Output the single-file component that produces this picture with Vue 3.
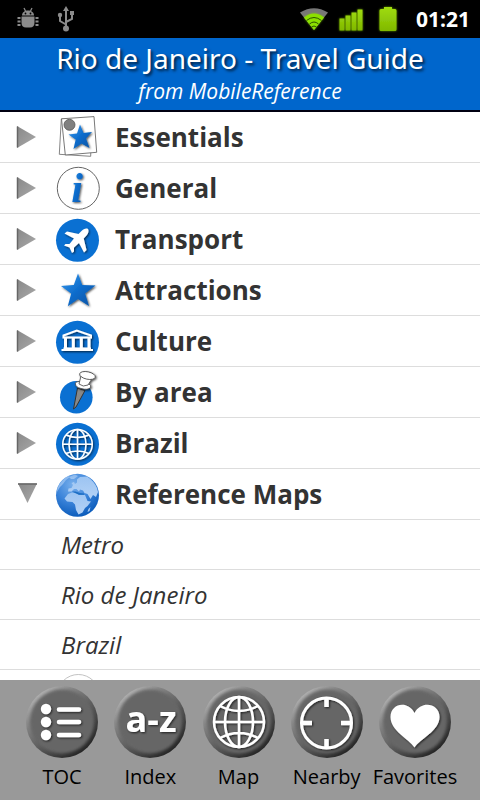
<script setup>
import { ref } from 'vue'

const sections = ref([
  { name: 'Essentials', icon: 'pages', open: false },
  { name: 'General', icon: 'info', open: false },
  { name: 'Transport', icon: 'plane', open: false },
  { name: 'Attractions', icon: 'star', open: false },
  { name: 'Culture', icon: 'museum', open: false },
  { name: 'By area', icon: 'pin', open: false },
  { name: 'Brazil', icon: 'globe', open: false },
  { name: 'Reference Maps', icon: 'earth', open: true, children: ['Metro', 'Rio de Janeiro', 'Brazil'] },
  { name: '', icon: 'ring', open: false },
])

const tabs = [
  { name: 'TOC', icon: 'toc' },
  { name: 'Index', icon: 'index' },
  { name: 'Map', icon: 'map' },
  { name: 'Nearby', icon: 'nearby' },
  { name: 'Favorites', icon: 'heart' },
]
</script>

<template>
  <div class="screen">
    <svg class="defs" width="0" height="0" aria-hidden="true">
      <defs>
        <linearGradient id="blue" x1="0" y1="0" x2="1" y2="1">
          <stop offset="0" stop-color="#3c9bee" />
          <stop offset="0.5" stop-color="#0c6ccc" />
          <stop offset="1" stop-color="#06509f" />
        </linearGradient>
        <linearGradient id="arrow" x1="0" y1="0" x2="1" y2="1">
          <stop offset="0" stop-color="#888" />
          <stop offset="1" stop-color="#aaa" />
        </linearGradient>
        <linearGradient id="rim" x1="0.15" y1="0.1" x2="0.8" y2="0.9">
          <stop offset="0" stop-color="#b4b4b4" />
          <stop offset="0.25" stop-color="#868686" />
          <stop offset="0.6" stop-color="#5a5a5a" />
          <stop offset="1" stop-color="#262626" />
        </linearGradient>
        <linearGradient id="charge" x1="0" y1="0" x2="0" y2="1">
          <stop offset="0" stop-color="#a0dc10" />
          <stop offset="1" stop-color="#80b800" />
        </linearGradient>
        <radialGradient id="ocean" cx="0.4" cy="0.25" r="0.8">
          <stop offset="0" stop-color="#79b0ec" />
          <stop offset="0.5" stop-color="#3b84da" />
          <stop offset="1" stop-color="#0758b8" />
        </radialGradient>
        <linearGradient id="land" x1="0" y1="0" x2="0" y2="1">
          <stop offset="0" stop-color="#9cc4f2" />
          <stop offset="1" stop-color="#b4d2f6" />
        </linearGradient>
        <filter id="shade" x="-20%" y="-20%" width="150%" height="150%">
          <feDropShadow dx="1" dy="1" stdDeviation="0.8" flood-color="#000" flood-opacity="0.7" />
        </filter>
        <filter id="soft" x="-10%" y="-10%" width="120%" height="120%">
          <feGaussianBlur stdDeviation="1.5" />
        </filter>
        <filter id="glow" x="-30%" y="-30%" width="160%" height="160%">
          <feDropShadow dx="0" dy="0" stdDeviation="1" flood-color="#8bd000" flood-opacity="0.7" />
        </filter>
      </defs>
    </svg>

    <div class="status">
      <svg class="droid" viewBox="0 0 24 24" aria-hidden="true">
        <g fill="#8b8b8b">
          <path d="M6 8.500C6 5.500 8.500 3.500 12 3.500S18 5.500 18 8.500Z" />
          <path d="M5.500 9.500H18.500V15.500Q18.500 20.500 14 20.500H10Q5.500 20.500 5.500 15.500Z" />
        </g>
        <path d="M8 1L9.500 4M16 1L14.500 4" fill="none" stroke="#8b8b8b" stroke-width="1.300" />
        <path d="M1.500 10H4.500V12H1.500ZM1.500 13.500H4.500V15.500H1.500ZM1.500 17H4.500V19H1.500ZM19.500 10H22.500V12H19.500ZM19.500 13.500H22.500V15.500H19.500ZM19.500 17H22.500V19H19.500Z" fill="#8b8b8b" />
        <circle cx="9.500" cy="6.500" r="0.900" /><circle cx="14.500" cy="6.500" r="0.900" />
      </svg>
      <svg class="usb" viewBox="0 0 18 26" aria-hidden="true">
        <path d="M9 22V3M9 18.500L3 15V9M9 16L15 13V7" fill="none" stroke="#8b8b8b" stroke-width="2" />
        <g fill="#8b8b8b">
          <path d="M9 0L12 5H6Z" /><circle cx="9" cy="22.500" r="3" />
          <circle cx="3" cy="9" r="2.200" /><path d="M13 5H17V9H13Z" />
        </g>
      </svg>
      <span class="gap"></span>
      <svg class="wifi" viewBox="0 0 28 24" aria-hidden="true">
        <path d="M14 23L0 5.500Q14 -3 28 5.500Z" fill="#777" />
        <path d="M14 23L4 10.500Q14 2.500 24 10.500Z" fill="#8be000" filter="url(#glow)" />
        <path d="M6.500 13.500Q14 7.500 21.500 13.500M9.500 17Q14 13 18.500 17M11.500 20Q14 18 16.500 20" fill="none" stroke="#2c5200" stroke-width="1" />
      </svg>
      <svg class="signal" viewBox="0 0 24 24" aria-hidden="true">
        <path d="M0.500 11.500H5.500V23.500H0.500ZM6.500 8.500H11.500V23.500H6.500ZM12.500 5.500H17.500V23.500H12.500ZM18.500 2.500H23.500V23.500H18.500Z" fill="url(#charge)" filter="url(#glow)" />
      </svg>
      <svg class="battery" viewBox="0 0 18 26" aria-hidden="true">
        <path d="M5 1H13V3H16Q17.500 3 17.500 4.500V23.500Q17.500 25 16 25H2Q0.500 25 0.500 23.500V4.500Q0.500 3 2 3H5Z" fill="url(#charge)" filter="url(#glow)" />
      </svg>
      <time class="clock">01:21</time>
    </div>

    <header class="header">
      <h1>Rio de Janeiro - Travel Guide</h1>
      <p>from MobileReference</p>
    </header>

    <main class="list">
      <section v-for="(section, i) in sections" :key="i">
        <button class="row" type="button" :aria-expanded="section.open" @click="section.open = !section.open">
          <svg class="arrow" viewBox="0 0 24 24" aria-hidden="true">
            <template v-if="section.open && section.name">
              <path d="M2 1.500H21L11.500 21Z" fill="url(#arrow)" />
              <path d="M2 2H21" stroke="#666" stroke-width="1.500" />
            </template>
            <template v-else-if="section.name">
              <path d="M1 1L20 12L1 23Z" fill="url(#arrow)" />
              <path d="M1.500 1.500V22.500" stroke="#666" stroke-width="1.500" />
            </template>
          </svg>
          <svg class="icon" viewBox="0 0 44 44" aria-hidden="true">
            <g v-if="section.icon === 'pages'">
              <path d="M5.300 3L3.300 38.300L34.700 40.300L35.500 4Z" fill="#fff" stroke="#666" stroke-width="0.800" />
              <path d="M5.500 2.800L38 0.600L40.700 36.300L9.300 39Z" fill="#fff" stroke="#555" stroke-width="0.800" />
              <path d="M24 8.500L27.500 17L36 16L30 22.500L33.500 32L25.500 27.500L17.500 33L19.700 23.500L12.500 18.500L21 17.500Z" fill="url(#blue)" filter="url(#shade)" />
              <circle cx="13.500" cy="8.800" r="5.500" fill="#808080" stroke="#555" stroke-width="0.800" />
            </g>
            <g v-else-if="section.icon === 'info'">
              <circle cx="22.300" cy="21.300" r="21" fill="#fff" stroke="#555" stroke-width="0.900" />
              <text class="letter-i" x="21" y="35" text-anchor="middle" filter="url(#shade)">i</text>
            </g>
            <circle v-else-if="section.icon === 'ring'" cx="22.300" cy="21.500" r="21" fill="#fff" stroke="#bbb" stroke-width="0.900" />
            <g v-else-if="section.icon === 'plane'">
              <circle cx="21.500" cy="22.300" r="21.500" fill="#0a70d2" />
              <path d="M32 11C30 10 27.500 11 25.500 13L22.500 16L11 13.500L8.500 15.500L18 20.500L13.500 26L9.500 26L8 27.500L13.500 29.500L16 35L18 33.500V29.500L23 25L28 34.500L30.500 32L27.700 20.500L30.500 17.500C32.500 15.500 33 12.500 32 11Z" fill="#fff" filter="url(#shade)" />
            </g>
            <path v-else-if="section.icon === 'star'" d="M22 4.500L26.200 16L39.500 16.500L29 24.500L33 37L22 30L11.800 37.200L15.200 24.500L5 17L17.800 16Z" fill="url(#blue)" filter="url(#shade)" />
            <g v-else-if="section.icon === 'museum'">
              <circle cx="21.500" cy="22.300" r="21.500" fill="#0a70d2" />
              <g filter="url(#shade)">
                <path d="M7.500 17.500V15.500L20.800 10.500L35 15.500V17.500Z" fill="none" stroke="#fff" stroke-width="2" />
                <path d="M9.500 18V28M17.300 18V28M25.300 18V28M33 18V28" stroke="#fff" stroke-width="3" />
                <path d="M7.500 27.500H35V29H37V31H5.500V29H7.500Z" fill="#fff" />
              </g>
            </g>
            <g v-else-if="section.icon === 'pin'">
              <circle cx="20.300" cy="26.300" r="16.300" fill="#0a70d2" />
              <path d="M21.500 17L29 19.500L20 36L17.500 38Z" fill="#888" stroke="#333" stroke-width="1" />
              <g fill="#fff" stroke="#444" stroke-width="0.800" filter="url(#shade)">
                <path d="M19.500 12.500Q19 10.500 23 10.500L32 12.500Q36 14 34.500 16.500Q32 19.500 25 17.500Q19 16 19.500 12.500Z" />
                <path d="M25 5L23 13Q27 16.500 32 14L36.500 7Z" />
                <ellipse cx="31.500" cy="4.500" rx="8" ry="3.700" transform="rotate(12 31.500 4.500)" />
              </g>
            </g>
            <g v-else-if="section.icon === 'globe'">
              <circle cx="21.500" cy="22.300" r="21.500" fill="#0a70d2" />
              <g fill="none" stroke="#fff" stroke-width="1.500" filter="url(#shade)">
                <circle cx="21.500" cy="22.300" r="14.800" />
                <ellipse cx="21.500" cy="22.300" rx="8.500" ry="14.800" />
                <path d="M21.500 7.500V37M6.700 22.300H36.300M10 13Q21.500 18 33 13M10 31.500Q21.500 26.500 33 31.500" />
              </g>
            </g>
            <g v-else>
              <circle cx="21.500" cy="22.300" r="21.500" fill="url(#ocean)" />
              <g fill="url(#land)">
                <path d="M1.500 15Q5 7 12 3L14 4L10 7L7 11L4 14L1 19Z" opacity="0.7" />
                <path d="M13 4L19 1.500L22 3L18 6L15 6Z" opacity="0.7" />
                <path d="M12 18.500L12.500 15.500L15.500 15L17 12L15.500 10L18 9L19 11L21 9.500L21 6.500L24 4L31 3.500Q38 8 41 15L42 19L40 24L37 22L34.500 26L31.500 21L28.500 20L27 17.500L24 16.500L23 18.500L20.500 16L18 16L15.500 18.500Z" />
                <path d="M12 21L16 19.500L20 20L23 22L29 22L31.500 28L35 28.500L31.500 33L29 35L26.500 39.500L22.500 41.500L20 37L19 31.500L16.500 29L11 28.500L8.500 25.500Z" />
                <path d="M32.500 36L34.500 34L33.500 38L31.500 39Z" />
              </g>
              <path d="M16 18.500L19.500 18.500L24 20L28 20.500L28 21.800L23 21.800L19 20Z" fill="#1d6fc4" />
            </g>
          </svg>
          <span class="name">{{ section.name }}</span>
        </button>
        <template v-if="section.open">
          <a v-for="child in section.children" :key="child" class="sub" href="#">{{ child }}</a>
        </template>
      </section>
    </main>

    <nav class="tabs">
      <button v-for="tab in tabs" :key="tab.name" class="tab" type="button">
        <svg viewBox="0 0 74 74" aria-hidden="true">
          <circle cx="37" cy="37" r="36" fill="url(#rim)" />
          <circle cx="37" cy="36.500" r="32" fill="#666" filter="url(#soft)" />
          <g filter="url(#shade)">
            <g v-if="tab.icon === 'toc'" fill="#fff" stroke="#fff" stroke-linecap="round">
              <g stroke="none"><circle cx="21" cy="24" r="5.200" /><circle cx="21" cy="37" r="5.200" /><circle cx="21" cy="50" r="5.200" /></g>
              <path d="M34 24.500H54M34 37H54M34 50H54" stroke-width="4.500" />
            </g>
            <text v-else-if="tab.icon === 'index'" class="letters" x="38" y="47" text-anchor="middle">a-z</text>
            <g v-else-if="tab.icon === 'map'" fill="none" stroke="#fff" stroke-width="2.500">
              <circle cx="37" cy="37" r="25" />
              <ellipse cx="37" cy="37" rx="14" ry="25" />
              <path d="M37 12V62M12 37H62M18 21Q37 31 56 21M18 53Q37 43 56 53" />
            </g>
            <g v-else-if="tab.icon === 'nearby'" fill="none" stroke="#fff">
              <circle cx="36.500" cy="38" r="25" stroke-width="3" />
              <path d="M36.500 13V22M36.500 54V63M12 38H22M51 38H61" stroke-width="4.500" />
            </g>
            <path v-else d="M36.500 62.500C31 54 12.500 46 12.500 32C12.500 18 30 15 36.500 28C43 15 61.500 18 61.500 32C61.500 46 42 54 36.500 62.500Z" fill="#fff" />
          </g>
        </svg>
        <span>{{ tab.name }}</span>
      </button>
    </nav>
  </div>
</template>

<style>
body {
  margin: 0;
  background: #fff;
}
</style>

<style scoped>
.screen {
  display: flex;
  flex-direction: column;
  height: 100vh;
  background: #fff;
  font-family: "Open Sans", "Noto Sans", sans-serif;
  color: #333;
}

.defs {
  position: absolute;
}

button {
  border: 0;
  padding: 0;
  background: none;
  font: inherit;
  color: inherit;
}

.status {
  display: flex;
  align-items: center;
  flex: none;
  height: 38px;
  padding: 0 10px 0 16px;
  background: #000;
  color: #fff;
}

.status svg {
  overflow: visible;
}

.droid {
  width: 24px;
  height: 24px;
}

.usb {
  width: 18px;
  height: 26px;
  margin-left: 17px;
}

.gap {
  flex: 1;
}

.wifi {
  width: 28px;
  height: 24px;
}

.signal {
  width: 24px;
  height: 24px;
  margin-left: 11px;
}

.battery {
  width: 18px;
  height: 26px;
  margin-left: 16px;
}

.clock {
  margin-left: 19px;
  font-size: 21px;
  font-weight: 700;
}

.header {
  flex: none;
  padding: 3px 0 5px;
  border-bottom: 2px solid #001;
  background: #0066cc;
  color: #fff;
  text-align: center;
}

.header h1 {
  margin: 0;
  font-family: "Noto Sans", "Open Sans", sans-serif;
  font-size: 28px;
  font-weight: 400;
  line-height: 34px;
  text-shadow: 2px 2px 3px rgba(0, 0, 0, 0.7);
}

.header p {
  margin: 0;
  padding-top: 2px;
  font-size: 21px;
  font-style: italic;
  line-height: 28px;
}

.list {
  flex: 1;
  min-height: 0;
  overflow: hidden;
}

.row {
  display: flex;
  align-items: center;
  width: 100%;
  padding: 4px 16px 2px;
  border-bottom: 1px solid #ddd;
  text-align: left;
}

.arrow {
  flex: none;
  width: 24px;
  height: 24px;
  margin-bottom: 2px;
}

.icon {
  flex: none;
  width: 44px;
  height: 44px;
  margin-left: 16px;
  overflow: visible;
}

.name {
  margin-left: 15px;
  padding-bottom: 2px;
  font-size: 26px;
  font-weight: 700;
  line-height: 42px;
}

.letter-i {
  fill: url(#blue);
  font-family: "Liberation Serif", serif;
  font-size: 42px;
  font-style: italic;
  font-weight: 700;
}

.sub {
  display: block;
  padding: 2px 16px 1px 61px;
  border-bottom: 1px solid #ddd;
  color: #333;
  font-size: 24px;
  font-style: italic;
  line-height: 46px;
  text-decoration: none;
}

.tabs {
  display: flex;
  flex: none;
  padding: 5px 21px 5px 18px;
  background: #999;
  color: #000;
}

.tab {
  display: flex;
  flex: 1 1 0;
  flex-direction: column;
  align-items: center;
  min-width: 0;
  font-size: 20px;
  line-height: 36px;
}

.tab svg {
  width: 74px;
  height: 74px;
}

.tab span {
  white-space: nowrap;
}

.letters {
  fill: #fff;
  font-size: 36px;
  font-weight: 700;
}
</style>
